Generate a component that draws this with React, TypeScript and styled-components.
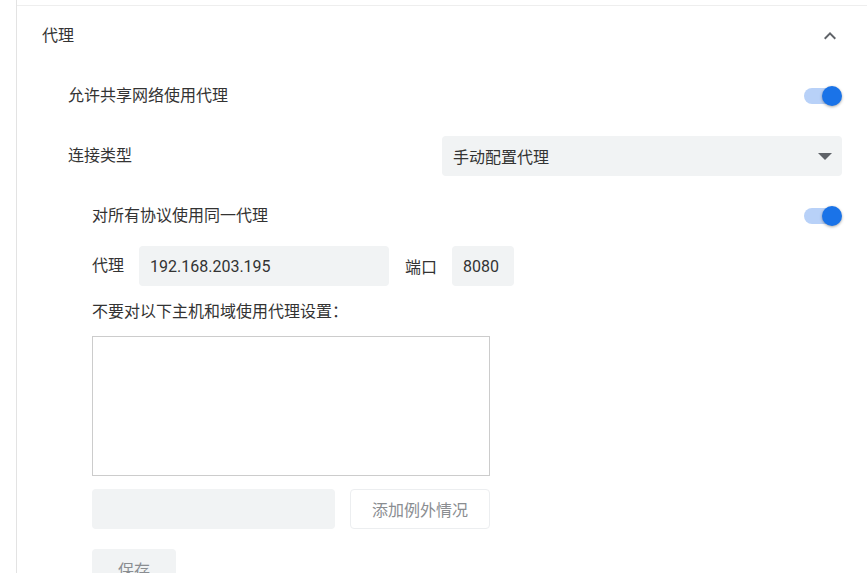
import styled, { createGlobalStyle } from 'styled-components'

const GlobalStyle = createGlobalStyle`
  html, body {
    margin: 0;
    padding: 0;
    background: #ffffff;
  }
  body {
    font-family: Roboto, "Noto Sans CJK SC", "Noto Sans", sans-serif;
    font-size: 16px;
    color: #333333;
    overflow: hidden;
  }
`

const Page = styled.div`
  height: 573px;
  margin-left: 16px;
  padding-top: 5px;
  border-left: 1px solid #e3e3e3;
  box-sizing: border-box;
`

const Section = styled.section`
  border-top: 1px solid #eeeeee;
  padding: 0 25px;
`

const SectionHeader = styled.div`
  height: 60px;
  display: flex;
  align-items: center;
  justify-content: space-between;
`

const SectionTitle = styled.span`
  line-height: 24px;
  margin-top: -1px;
`

const Body = styled.div`
  padding-left: 26px;
`

const Row = styled.div`
  height: 60px;
  display: flex;
  align-items: center;
  justify-content: space-between;
`

const Label = styled.span`
  line-height: 24px;
`

const Nested = styled.div`
  padding-left: 24px;
  display: flex;
  flex-direction: column;
`

const ToggleTrack = styled.div<{ $on: boolean }>`
  position: relative;
  width: 36px;
  height: 16px;
  border-radius: 8px;
  margin-right: 2px;
  background: ${p => (p.$on ? '#b8d1f8' : '#bdc1c6')};
`

const ToggleKnob = styled.div<{ $on: boolean }>`
  position: absolute;
  top: -2px;
  left: ${p => (p.$on ? '18px' : '-2px')};
  width: 20px;
  height: 20px;
  border-radius: 50%;
  background: ${p => (p.$on ? '#1a73e8' : '#ffffff')};
  box-shadow: 0 1px 3px rgba(0, 0, 0, 0.35);
`

const Select = styled.div`
  width: 400px;
  height: 40px;
  box-sizing: border-box;
  background: #f1f3f4;
  border-radius: 4px;
  padding: 0 10px 0 11px;
  display: flex;
  align-items: center;
  justify-content: space-between;
`

const Field = styled.div<{ $width: number }>`
  width: ${p => p.$width}px;
  height: 40px;
  box-sizing: border-box;
  background: #f1f3f4;
  border-radius: 4px;
  padding: 0 10px 0 11px;
  display: flex;
  align-items: center;
`

const ProxyRow = styled.div`
  display: flex;
  align-items: center;
  gap: 15px;
`

const PortLabel = styled.span`
  margin-left: 1px;
`

const HintText = styled.div`
  margin-top: 14px;
  line-height: 24px;
`

const TextArea = styled.div`
  margin-top: 12px;
  width: 398px;
  height: 140px;
  box-sizing: border-box;
  border: 1px solid #cccccc;
`

const ExceptionRow = styled.div`
  margin-top: 13px;
  display: flex;
  gap: 15px;
`

const OutlineButton = styled.div`
  width: 140px;
  height: 40px;
  box-sizing: border-box;
  border: 1px solid #eceef0;
  border-radius: 4px;
  color: #8a8d91;
  display: flex;
  align-items: center;
  justify-content: center;
`

const SaveButton = styled.div`
  margin-top: 20px;
  width: 84px;
  height: 40px;
  box-sizing: border-box;
  background: #f1f3f4;
  border-radius: 4px;
  color: #8a8d91;
  display: flex;
  align-items: center;
  justify-content: center;
`

function Toggle({ on }: { on: boolean }) {
  return (
    <ToggleTrack $on={on}>
      <ToggleKnob $on={on} />
    </ToggleTrack>
  )
}

function ChevronUp() {
  return (
    <svg width="24" height="24" viewBox="0 0 24 24">
      <path d="M7.41 15.41 12 10.83l4.59 4.58L18 14l-6-6-6 6z" fill="#5f6368" />
    </svg>
  )
}

function DropArrow() {
  return (
    <svg width="14" height="7" viewBox="0 0 14 7">
      <path d="M0 0h14L7 7z" fill="#5f6368" />
    </svg>
  )
}

export default function App() {
  return (
    <>
      <GlobalStyle />
      <Page>
        <Section>
          <SectionHeader>
            <SectionTitle>代理</SectionTitle>
            <ChevronUp />
          </SectionHeader>
          <Body>
            <Row>
              <Label>允许共享网络使用代理</Label>
              <Toggle on />
            </Row>
            <Row>
              <Label>连接类型</Label>
              <Select>
                <span>手动配置代理</span>
                <DropArrow />
              </Select>
            </Row>
            <Nested>
              <Row>
                <Label>对所有协议使用同一代理</Label>
                <Toggle on />
              </Row>
              <ProxyRow>
                <Label>代理</Label>
                <Field $width={250}>192.168.203.195</Field>
                <PortLabel>端口</PortLabel>
                <Field $width={62}>8080</Field>
              </ProxyRow>
              <HintText>不要对以下主机和域使用代理设置：</HintText>
              <TextArea />
              <ExceptionRow>
                <Field $width={243} />
                <OutlineButton>添加例外情况</OutlineButton>
              </ExceptionRow>
              <SaveButton>保存</SaveButton>
            </Nested>
          </Body>
        </Section>
      </Page>
    </>
  )
}
